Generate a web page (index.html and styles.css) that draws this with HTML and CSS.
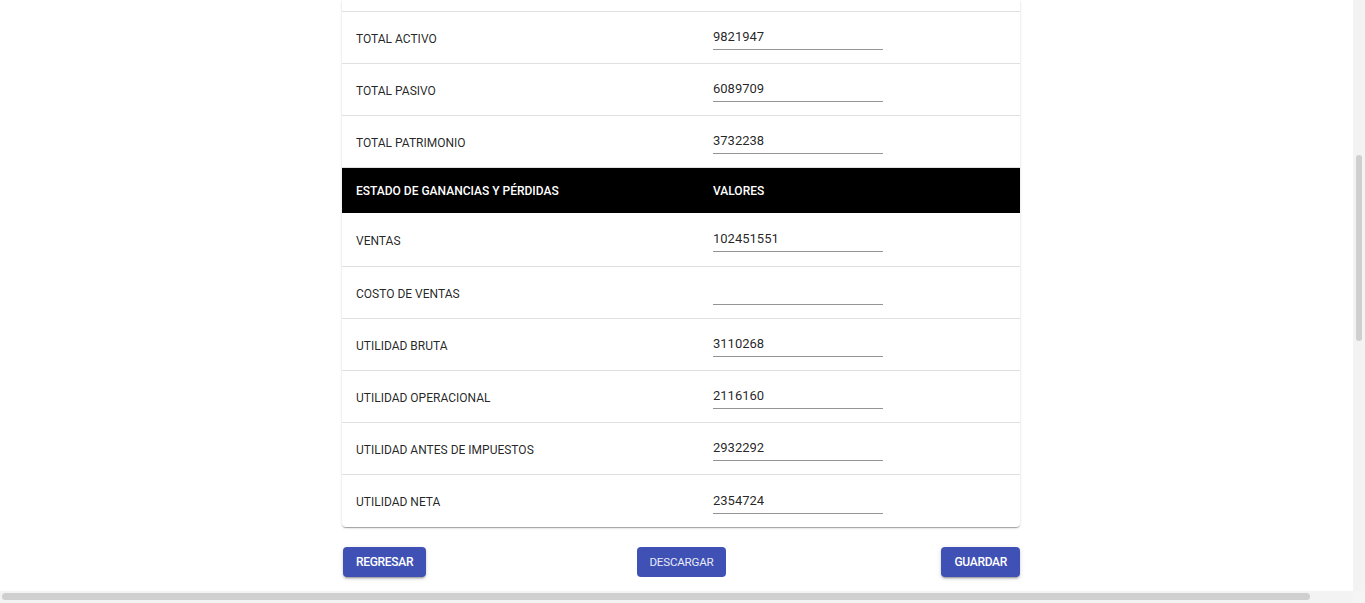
FILE: index.html
```html
<!DOCTYPE html>
<html lang="es">
<head>
<meta charset="utf-8">
<title>Estados financieros</title>
<link rel="stylesheet" href="styles.css">
</head>
<body>
<div class="viewport">
  <div class="main">
    <div class="page">
      <div class="content">
        <div class="card">
          <div class="row row-cut"></div>
          <div class="row"><div class="cell label">TOTAL ACTIVO</div><div class="cell value"><div class="input">9821947</div></div></div>
          <div class="row"><div class="cell label">TOTAL PASIVO</div><div class="cell value"><div class="input">6089709</div></div></div>
          <div class="row"><div class="cell label">TOTAL PATRIMONIO</div><div class="cell value"><div class="input">3732238</div></div></div>
          <div class="row head"><div class="cell label">ESTADO DE GANANCIAS Y PÉRDIDAS</div><div class="cell value">VALORES</div></div>
          <div class="row first"><div class="cell label">VENTAS</div><div class="cell value"><div class="input">102451551</div></div></div>
          <div class="row"><div class="cell label">COSTO DE VENTAS</div><div class="cell value"><div class="input"></div></div></div>
          <div class="row"><div class="cell label">UTILIDAD BRUTA</div><div class="cell value"><div class="input">3110268</div></div></div>
          <div class="row"><div class="cell label">UTILIDAD OPERACIONAL</div><div class="cell value"><div class="input">2116160</div></div></div>
          <div class="row"><div class="cell label">UTILIDAD ANTES DE IMPUESTOS</div><div class="cell value"><div class="input">2932292</div></div></div>
          <div class="row last"><div class="cell label">UTILIDAD NETA</div><div class="cell value"><div class="input">2354724</div></div></div>
        </div>
        <div class="actions">
          <button class="btn btn-start">REGRESAR</button>
          <button class="btn btn-flat btn-center">DESCARGAR</button>
          <button class="btn btn-end">GUARDAR</button>
        </div>
      </div>
    </div>
    <div class="vscroll"><div class="vthumb"></div></div>
  </div>
  <div class="hbar">
    <div class="hscroll"><div class="hthumb"></div></div>
    <div class="corner"></div>
  </div>
</div>
</body>
</html>
```
FILE: styles.css
```css
* { box-sizing: border-box; }
html, body { margin: 0; padding: 0; background: #fff; }
body { font-family: Roboto, "Liberation Sans", Arial, sans-serif; color: rgba(0,0,0,0.87); }

.viewport { width: 1365px; height: 603px; display: flex; flex-direction: column; overflow: hidden; }
.main { flex: 1; display: flex; min-height: 0; }
.page { flex: 1; overflow: hidden; background: #fff; }
.content { width: 678px; margin-left: 342px; }

.card {
  background: #fff;
  border-radius: 0 0 4px 4px;
  box-shadow: 0px 2px 1px -1px rgba(0,0,0,0.2), 0px 1px 1px 0px rgba(0,0,0,0.14), 0px 1px 3px 0px rgba(0,0,0,0.12);
}
.row { display: flex; align-items: center; height: 52px; border-bottom: 1px solid #e0e0e0; }
.row-cut { height: 12px; }
.row.first { height: 54px; }
.row.last { border-bottom: none; height: 52px; }
.row.head { height: 45px; background: #000; border-bottom: none; color: #fff; font-weight: 500; }
.row.head .cell { padding-top: 1px; }
.cell { font-size: 12px; }
.label { width: 357px; padding-left: 14px; padding-top: 2px; }
.value { flex: 1; padding-left: 14px; }
.input {
  width: 170px; height: 25px; font-size: 13px; line-height: 18px; padding-top: 3px;
  border-bottom: 1px solid #949494; color: rgba(0,0,0,0.87);
}

.actions { display: grid; grid-template-columns: 1fr 1fr 1fr; margin-top: 20px; padding-left: 1px; }
.btn {
  height: 30px; border: none; border-radius: 4px; background: #3f51b5; color: #fff;
  font-family: Roboto, "Liberation Sans", Arial, sans-serif; font-size: 12px; font-weight: 500;
  letter-spacing: -0.3px; padding: 0 13px;
  box-shadow: 0px 3px 1px -2px rgba(0,0,0,0.2), 0px 2px 2px 0px rgba(0,0,0,0.14), 0px 1px 5px 0px rgba(0,0,0,0.12);
}
.btn-flat { box-shadow: none; font-weight: 400; color: #e8eaf6; padding: 0 12px; font-size: 11.6px; letter-spacing: -0.2px; }
.btn-start { justify-self: start; }
.btn-center { justify-self: center; }
.btn-end { justify-self: end; }

.vscroll { width: 12px; background: #f3f3f3; padding-top: 155px; display: flex; justify-content: center; }
.vthumb { width: 6px; height: 186px; background: #cfcfcf; border-radius: 3px; }
.hbar { height: 12px; display: flex; }
.hscroll { flex: 1; background: #f3f3f3; padding: 2px 0 0 2px; }
.hthumb { width: 1308px; height: 7px; background: #cfcfcf; border-radius: 4px; }
.corner { width: 12px; background: #f5f5f5; }
```
